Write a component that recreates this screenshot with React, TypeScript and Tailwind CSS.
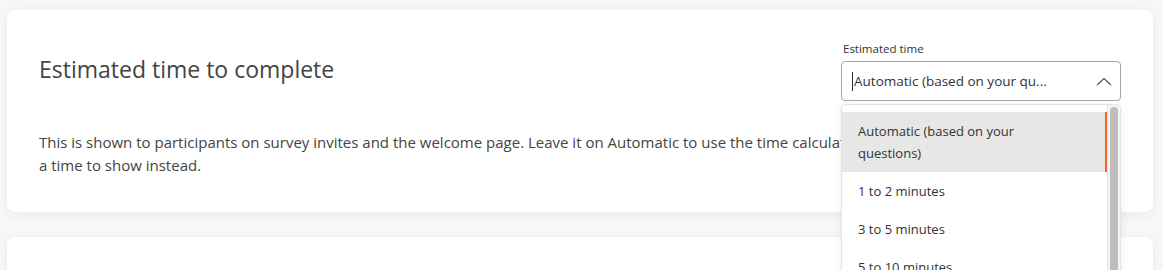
import React from 'react';

const options = [
  'Automatic (based on your questions)',
  '1 to 2 minutes',
  '3 to 5 minutes',
  '5 to 10 minutes',
  '10 to 15 minutes',
];

const ChevronUp: React.FC = () => (
  <svg width="16" height="9" viewBox="0 0 16 9" fill="none" stroke="#555" strokeWidth="1.2">
    <path d="M1 8 L8 1.5 L15 8" />
  </svg>
);

const App: React.FC = () => {
  return (
    <div className="min-h-screen bg-[#f7f7f7] pl-[7px] pr-[10px] pt-[10px] font-['Open_Sans',sans-serif] text-[#444]">
      <div className="rounded-[8px] bg-white px-8 pt-8 pb-[35px] shadow-[0_2px_12px_rgba(0,0,0,0.06)]">
        <div className="flex items-center justify-between">
          <h2 className="pb-[4px] text-[23px] font-normal leading-none text-[#444]">Estimated time to complete</h2>
          <div className="relative w-[280px]">
            <label className="mb-[5px] block pl-[2px] text-[11.5px] leading-[14px] text-[#333]">Estimated time</label>
            <div className="flex h-[40px] items-center justify-between rounded-[4px] border border-[#a6a6a6] bg-white pl-[10px] pr-[8px]">
              <div className="flex items-center text-[13.5px] text-[#333]">
                <span className="mr-[1px] h-[19px] w-px bg-[#333]" />
                <span>Automatic (based on your qu...</span>
              </div>
              <ChevronUp />
            </div>
            <div className="absolute left-0 top-[62px] z-10 flex h-[200px] w-[280px] rounded-[4px] border border-[#e4e4e4] bg-white shadow-[0_2px_8px_rgba(0,0,0,0.08)]">
              <ul className="flex-1 pt-[7px]">
                {options.map((o, i) => (
                  <li
                    key={o}
                    className={
                      i === 0
                        ? 'border-r-2 border-[#f2662b] bg-[#e7e7e7] py-[8px] pl-[16px] pr-[48px] text-[13px] leading-[22px] text-[#333]'
                        : 'py-[8px] pl-[16px] pr-[48px] text-[13px] leading-[22px] text-[#333]'
                    }
                  >
                    {o}
                  </li>
                ))}
              </ul>
              <div className="w-[13px] border-l border-[#e4e4e4] bg-[#f4f4f4] pt-[2px] pl-[2px] pr-[2px]">
                <div className="h-[200px] rounded-t-[4px] bg-[#bdbdbd]" />
              </div>
            </div>
          </div>
        </div>
        <p className="mt-[30px] text-[15px] leading-[23px] text-[#444]">
          This is shown to participants on survey invites and the welcome page. Leave it on Automatic to use the time calculated from your questions, or choose
          <br />
          a time to show instead.
        </p>
      </div>
      <div className="mt-[25px] h-[100px] rounded-[8px] bg-white shadow-[0_2px_12px_rgba(0,0,0,0.06)]" />
    </div>
  );
};

export default App;
